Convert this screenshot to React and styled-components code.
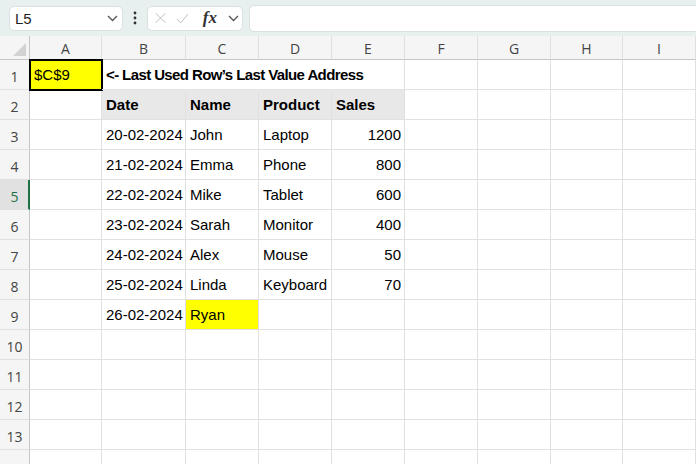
import React from 'react';
import styled, { createGlobalStyle } from 'styled-components';

const GlobalStyle = createGlobalStyle`
  body {
    margin: 0;
    background: #ffffff;
    overflow: hidden;
  }
`;

const Page = styled.div`
  width: 696px;
  height: 464px;
  overflow: hidden;
  display: flex;
  flex-direction: column;
  font-family: "Liberation Sans", Arial, sans-serif;
`;

const Toolbar = styled.div`
  height: 36px;
  flex-shrink: 0;
  background: #e7efef;
  display: flex;
  align-items: center;
  padding-left: 9px;
  box-sizing: border-box;
`;

const NameBox = styled.div`
  width: 114px;
  height: 25px;
  box-sizing: border-box;
  background: #ffffff;
  border: 1px solid #d9e1e1;
  border-radius: 5px;
  display: flex;
  align-items: center;
  justify-content: space-between;
  padding: 0 4px 0 5px;
  font-size: 15px;
  color: #1f1f1f;
`;

const Dots = styled.div`
  width: 24px;
  display: flex;
  justify-content: center;
`;

const FormulaTools = styled.div`
  width: 96px;
  height: 25px;
  box-sizing: border-box;
  background: #ffffff;
  border: 1px solid #d9e1e1;
  border-radius: 5px;
  display: flex;
  align-items: center;
  padding: 0 3px 0 7px;
  gap: 10px;
`;

const Fx = styled.span`
  font-family: "Liberation Serif", "Times New Roman", serif;
  font-style: italic;
  font-weight: bold;
  font-size: 17px;
  color: #333;
  margin-left: 4px;
  margin-right: -7px;
`;

const FormulaInput = styled.div`
  flex: 1;
  height: 25px;
  margin-left: 6px;
  margin-right: -6px;
  background: #ffffff;
  border: 1px solid #d9e1e1;
  border-radius: 5px;
`;

const Grid = styled.div`
  display: grid;
  grid-template-columns: 30px 72px 84px 73px 73px 73px 73px 73px 72px 73px;
  grid-template-rows: 24px repeat(14, 30px);
`;

const Corner = styled.div`
  background: #f5f5f5;
  border-right: 1px solid #c6c6c6;
  border-bottom: 1px solid #c6c6c6;
  box-sizing: border-box;
  display: flex;
  align-items: flex-end;
  justify-content: flex-end;
  padding: 0 3px 3px 0;
`;

const ColHead = styled.div`
  background: #f5f5f5;
  border-right: 1px solid #e0e0e0;
  border-bottom: 1px solid #c6c6c6;
  box-sizing: border-box;
  display: flex;
  align-items: center;
  justify-content: center;
  font-family: "Open Sans", "Noto Sans", sans-serif;
  font-size: 14px;
  color: #444;
  padding-top: 1px;
`;

const RowHead = styled.div`
  background: ${p => (p.$active ? '#e1e1e1' : '#f5f5f5')};
  border-right: ${p => (p.$active ? '2px solid #1e7145' : '1px solid #c6c6c6')};
  border-bottom: 1px solid #e0e0e0;
  box-sizing: border-box;
  display: flex;
  align-items: center;
  justify-content: center;
  font-family: "Open Sans", "Noto Sans", sans-serif;
  font-size: 14px;
  color: ${p => (p.$active ? '#1e7145' : '#444')};
  padding-top: 3px;
  padding-left: ${p => (p.$active ? '1px' : '0')};
`;

const Cell = styled.div`
  position: relative;
  box-sizing: border-box;
  border-right: 1px solid ${p => (p.$noRight ? 'transparent' : '#e1e1e1')};
  border-bottom: 1px solid #e1e1e1;
  background: ${p => p.$fill || 'transparent'};
  display: flex;
  align-items: center;
  justify-content: ${p => (p.$right ? 'flex-end' : 'flex-start')};
  padding: 0 ${p => (p.$right ? '3px' : '0')} 0 ${p => (p.$right ? '0' : '4px')};
  font-size: 15px;
  font-weight: ${p => (p.$bold ? 'bold' : 'normal')};
  letter-spacing: ${p => (p.$tight ? '-0.6px' : 'normal')};
  color: #000;
  white-space: nowrap;
  overflow: visible;
  z-index: ${p => (p.$over ? 1 : 0)};
  outline: ${p => (p.$boxed ? '2px solid #000' : 'none')};
  outline-offset: -1px;
`;

const cols = ['A', 'B', 'C', 'D', 'E', 'F', 'G', 'H', 'I'];

const data = [
  ['20-02-2024', 'John', 'Laptop', '1200'],
  ['21-02-2024', 'Emma', 'Phone', '800'],
  ['22-02-2024', 'Mike', 'Tablet', '600'],
  ['23-02-2024', 'Sarah', 'Monitor', '400'],
  ['24-02-2024', 'Alex', 'Mouse', '50'],
  ['25-02-2024', 'Linda', 'Keyboard', '70'],
  ['26-02-2024', 'Ryan', '', ''],
];

function Chevron() {
  return (
    <svg width="11" height="7" viewBox="0 0 11 7">
      <path d="M1 1 L5.5 5.5 L10 1" fill="none" stroke="#555" strokeWidth="1.3" />
    </svg>
  );
}

function rowCells(r) {
  if (r === 1) {
    return [
      <Cell key="A" $fill="#ffff00" $boxed $over>$C$9</Cell>,
      <Cell key="B" $bold $tight $noRight $over>&lt;- Last Used Row’s Last Value Address</Cell>,
      <Cell key="C" $noRight />,
      <Cell key="D" $noRight />,
      ...cols.slice(4).map(c => <Cell key={c} />),
    ];
  }
  if (r === 2) {
    return [
      <Cell key="A" />,
      ...['Date', 'Name', 'Product', 'Sales'].map(h => (
        <Cell key={h} $fill="#e8e8e8" $bold>{h}</Cell>
      )),
      ...cols.slice(5).map(c => <Cell key={c} />),
    ];
  }
  const d = data[r - 3];
  if (d) {
    return [
      <Cell key="A" />,
      <Cell key="B">{d[0]}</Cell>,
      <Cell key="C" $fill={r === 9 ? '#ffff00' : undefined}>{d[1]}</Cell>,
      <Cell key="D">{d[2]}</Cell>,
      <Cell key="E" $right>{d[3]}</Cell>,
      ...cols.slice(5).map(c => <Cell key={c} />),
    ];
  }
  return cols.map(c => <Cell key={c} />);
}

export default function App() {
  const rows = Array.from({ length: 14 }, (_, i) => i + 1);
  return (
    <Page>
      <GlobalStyle />
      <Toolbar>
        <NameBox>
          <span>L5</span>
          <Chevron />
        </NameBox>
        <Dots>
          <svg width="4" height="14" viewBox="0 0 4 14">
            <circle cx="2" cy="2" r="1.4" fill="#333" />
            <circle cx="2" cy="7" r="1.4" fill="#333" />
            <circle cx="2" cy="12" r="1.4" fill="#333" />
          </svg>
        </Dots>
        <FormulaTools>
          <svg width="14" height="14" viewBox="0 0 14 14">
            <path d="M1 1 L13 13 M13 1 L1 13" stroke="#b5b5b5" strokeWidth="1.1" fill="none" />
          </svg>
          <svg width="16" height="13" viewBox="0 0 16 13">
            <path d="M1 7 L6 12 L15 1" stroke="#b5b5b5" strokeWidth="1.1" fill="none" />
          </svg>
          <Fx>fx</Fx>
          <span style={{ marginLeft: 8, display: 'flex' }}>
            <Chevron />
          </span>
        </FormulaTools>
        <FormulaInput />
      </Toolbar>
      <Grid>
        <Corner>
          <svg width="13" height="13" viewBox="0 0 13 13">
            <path d="M13 0 L13 13 L0 13 Z" fill="#d2d2d2" />
          </svg>
        </Corner>
        {cols.map(c => (
          <ColHead key={c}>{c}</ColHead>
        ))}
        {rows.map(r => (
          <React.Fragment key={r}>
            <RowHead $active={r === 5}>{r < 14 ? r : ''}</RowHead>
            {rowCells(r)}
          </React.Fragment>
        ))}
      </Grid>
    </Page>
  );
}
